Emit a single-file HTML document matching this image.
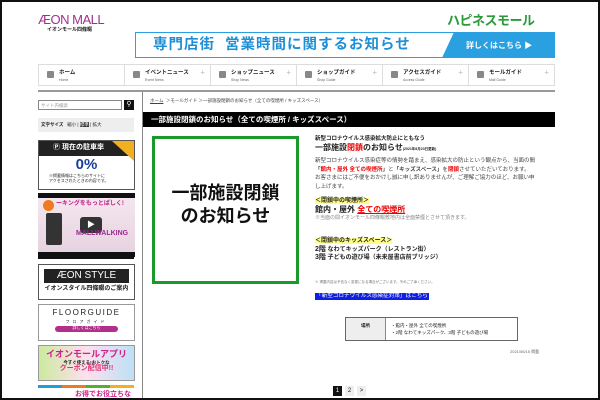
<!DOCTYPE html>
<html><head><meta charset="utf-8"><style>
*{margin:0;padding:0;box-sizing:border-box}
body{width:600px;height:400px;overflow:hidden;background:#fff;font-family:"Liberation Sans","Noto Sans CJK JP",sans-serif;position:relative;color:#222}
.a{position:absolute;line-height:1.2}
.frame{left:0;top:0;width:600px;height:400px;border:2px solid #111;z-index:50;pointer-events:none}
.nav{left:38px;top:64px;width:517px;height:22px;border:1px solid #ddd;display:flex}
.nav div{flex:1;border-right:1px solid #ddd;position:relative;font-size:5.5px;font-weight:bold;padding:5px 0 0 20px;line-height:6px;white-space:nowrap}
.nav div:last-child{border-right:none}
.nav div small{display:block;font-size:3.5px;font-weight:normal;color:#666;margin-top:1px}
.nav div i{position:absolute;left:8px;top:6px;width:7px;height:7px;background:#888;border-radius:1px}
.nav div b{position:absolute;right:5px;top:5px;color:#bbb;font-weight:normal;font-size:8px}
.t{font-size:5px;color:#444;white-space:nowrap}
.red{color:#e00}
.yl{background:#ff8;font-weight:bold;font-size:6px;line-height:7px}
</style></head><body>
<div class="a frame"></div>
<div class="a" style="left:38px;top:12px;font-size:13px;color:#a0308f;letter-spacing:-0.5px">ÆON MALL</div>
<div class="a" style="left:47px;top:27px;font-size:5px;font-weight:bold">イオンモール四條畷</div>
<div class="a" style="left:447px;top:13px;font-size:13px;font-weight:bold;color:#2a9a3a;letter-spacing:-0.5px">ハピネスモール</div>
<div class="a" style="left:135px;top:32px;width:420px;height:26px;border:1px solid #2aa0e0;background:#fff;overflow:hidden">
 <div class="a" style="left:17px;top:4px;font-size:14.5px;font-weight:bold;color:#1e8fd6;letter-spacing:1px;white-space:nowrap">専門店街&nbsp; 営業時間に関するお知らせ</div>
 <div class="a" style="left:305px;top:-1px;width:130px;height:28px;background:#2aa0e0;transform:skewX(-25deg);transform-origin:bottom left"></div>
 <div class="a" style="left:330px;top:8px;font-size:8px;font-weight:bold;color:#fff">詳しくはこちら ▶</div>
</div>
<div class="a nav">
 <div><i></i>ホーム<small>Home</small></div>
 <div><i></i>イベントニュース<small>Event News</small><b>+</b></div>
 <div><i></i>ショップニュース<small>Shop News</small><b>+</b></div>
 <div><i></i>ショップガイド<small>Shop Guide</small><b>+</b></div>
 <div><i></i>アクセスガイド<small>Access Guide</small><b>+</b></div>
 <div><i></i>モールガイド<small>Mall Guide</small><b>+</b></div>
</div>
<div class="a" style="left:38px;top:90px;width:517px;height:2px;background:#999"></div>
<div class="a" style="left:142px;top:92px;width:1px;height:308px;background:#888"></div>
<!-- sidebar -->
<div class="a" style="left:38px;top:100px;width:84px;height:10px;border:1px solid #888;font-size:4.5px;color:#999;padding:2px">サイト内検索</div>
<div class="a" style="left:124px;top:100px;width:10px;height:10px;background:#111;color:#fff;font-size:7px;text-align:center;line-height:10px">⚲</div>
<div class="a" style="left:38px;top:118px;width:96px;height:14px;background:#eee;font-size:4.5px;padding:4px 3px;white-space:nowrap"><b>文字サイズ</b> &nbsp; 縮小 | <span style="background:#333;color:#fff">標準</span> | 拡大</div>
<div class="a" style="left:38px;top:140px;width:97px;height:50px;border:1px solid #555">
 <div style="background:#222;height:15px;color:#fff;font-size:7px;font-weight:bold;padding:3px 0 0 14px">Ⓟ 現在の駐車率</div>
 <div class="a" style="right:0;top:0;width:0;height:0;border-top:20px solid #f0b020;border-left:22px solid transparent"></div>
 <div style="text-align:center;font-size:15px;font-weight:bold;color:#1a3e9a;line-height:17px">0%</div>
 <div style="font-size:4px;padding-left:10px;line-height:5px">※掲載情報はこちらのサイトに<br>アクセスされたときの内容です。</div>
</div>
<div class="a" style="left:38px;top:193px;width:97px;height:64px;background:#111">
 <div class="a" style="left:0;top:5px;width:97px;height:54px;background:linear-gradient(#f4e6ee,#e6d3e0)"></div>
 <div class="a" style="left:5px;top:7px;width:11px;height:11px;border-radius:50%;background:#f07a20"></div>
 <div class="a" style="left:18px;top:8px;font-size:6px;color:#c0208a;font-weight:bold">ーキングをもっとぱしく!</div>
 <div class="a" style="left:8px;top:20px;width:16px;height:32px;background:#333;border-radius:2px"></div>
 <div class="a" style="left:42px;top:24px;width:22px;height:16px;background:#333;border-radius:3px;color:#fff;font-size:8px;text-align:center;line-height:16px">▶</div>
 <div class="a" style="left:38px;top:37px;font-size:7px;color:#9a2a90;font-weight:bold">MALLWALKING</div>
</div>
<div class="a" style="left:38px;top:253px;width:96px;height:6px;background:#111"></div>
<div class="a" style="left:38px;top:264px;width:97px;height:36px;border:1px solid #555">
 <div style="margin:4px 5px 0;background:#222;color:#fff;font-size:10px;text-align:center;height:14px;line-height:14px">ÆON STYLE</div>
 <div style="font-size:6px;font-weight:bold;text-align:center;margin-top:3px">イオンスタイル四條畷のご案内</div>
</div>
<div class="a" style="left:38px;top:304px;width:97px;height:37px;border:1px solid #999;text-align:center">
 <div style="font-size:8px;letter-spacing:1.5px;margin-top:3px">FLOORGUIDE</div>
 <div style="font-size:4px;letter-spacing:3px;margin-top:2px">フロアガイド</div>
 <div style="margin:2px 16px 0;background:#b0308a;color:#fff;font-size:4px;border-radius:3px;height:6px">詳しくはこちら</div>
</div>
<div class="a" style="left:38px;top:345px;width:97px;height:36px;border:1px solid #999;background:linear-gradient(90deg,#cde9a0,#fde0ef,#bde0f5);text-align:center">
 <div style="font-size:9px;font-weight:bold;color:#d0208a;margin-top:3px">イオンモールアプリ</div>
 <div style="font-size:4.5px;font-weight:bold">今すぐ使える!おトクな</div>
 <div style="font-size:7px;font-weight:bold;color:#e03070">クーポン配信中!!</div>
</div>
<div class="a" style="left:38px;top:385px;width:96px;height:3px;background:linear-gradient(90deg,#20a0d0 25%,#f07a20 25% 50%,#50b030 50% 75%,#f0b020 75%)"></div>
<div class="a" style="left:75px;top:391px;font-size:7px;font-weight:bold;color:#d0208a">お得でお役立ちな</div>
<!-- main -->
<div class="a t" style="left:150px;top:98px;font-size:4.5px"><u>ホーム</u> &nbsp;＞モールガイド ＞一部施設閉鎖のお知らせ（全ての喫煙所 / キッズスペース）</div>
<div class="a" style="left:143px;top:112px;width:412px;height:15px;background:#000;color:#fff;font-size:7.5px;font-weight:bold;padding:3px 0 0 8px;white-space:nowrap">一部施設閉鎖のお知らせ（全ての喫煙所 / キッズスペース）</div>
<div class="a" style="left:152px;top:136px;width:147px;height:148px;border:3px solid #1a9a2a;text-align:center;font-size:18px;font-weight:bold;line-height:23px;padding-top:43px;color:#111">一部施設閉鎖<br>のお知らせ</div>
<div class="a" style="left:315px;top:136px;font-size:5.5px;font-weight:bold;white-space:nowrap">新型コロナウイルス感染拡大防止にともなう</div>
<div class="a" style="left:315px;top:143px;font-size:8px;font-weight:bold;white-space:nowrap">一部施設<span class="red">閉鎖</span>のお知らせ<span style="font-size:3.5px">(2021年8月23日更新)</span></div>
<div class="a t" style="left:315px;top:157px;line-height:8.5px;font-size:5.5px">新型コロナウイルス感染症等の情勢を踏まえ、感染拡大の防止という観点から、当面の間<br><b>「<span class="red">館内・屋外 全ての喫煙所</span>」</b>と<b>「キッズスペース」</b>を<b class="red">閉鎖</b>させていただいております。<br>お客さまにはご不便をおかけし誠に申し訳ありませんが、ご理解ご協力のほど、お願い申<br>し上げます。</div>
<div class="a" style="left:315px;top:198px;font-size:6px;line-height:7px"><span class="yl">＜閉鎖中の喫煙所＞</span></div>
<div class="a" style="left:315px;top:205px;font-size:8px;line-height:10px;font-weight:bold;white-space:nowrap">館内・屋外 <u class="red">全ての喫煙所</u></div>
<div class="a t" style="left:315px;top:215px;color:#888;line-height:6px">※当面の間イオンモール四條畷敷地内は全面禁煙とさせて頂きます。</div>
<div class="a" style="left:315px;top:238px;font-size:6px;line-height:7px"><span class="yl">＜閉鎖中のキッズスペース＞</span></div>
<div class="a" style="left:315px;top:246px;font-size:6px;line-height:8px;font-weight:bold;white-space:nowrap"><span style="font-size:7px">2階</span> なわてキッズパーク（レストラン街）</div>
<div class="a" style="left:315px;top:254px;font-size:6px;line-height:8px;font-weight:bold;white-space:nowrap"><span style="font-size:7px">3階</span> 子どもの遊び場（未来屋書店前ブリッジ）</div>
<div class="a t" style="left:315px;top:280px;font-size:3.5px;color:#777">※ 掲載内容は予告なく変更になる場合がございます。予めご了承ください。</div>
<div class="a" style="left:315px;top:293px;font-size:5.6px;line-height:7px;background:#1020e0;color:#fff;padding:0 1px;white-space:nowrap">「新型コロナウイルス感染症対策」はこちら</div>
<div class="a" style="left:345px;top:317px;width:173px;height:24px;border:1px solid #666;display:flex;font-size:4.5px">
 <div style="width:40px;background:#eee;border-right:1px solid #888;text-align:center;padding-top:5px;font-weight:bold">場所</div>
 <div style="padding:4px 0 0 5px;line-height:7px;white-space:nowrap">・館内・屋外 全ての喫煙所<br>・2階 なわてキッズパーク、3階 子どもの遊び場</div>
</div>
<div class="a t" style="left:510px;top:350px;font-size:4px;color:#666">2021/06/15 掲載</div>
<div class="a" style="left:333px;top:386px;width:9px;height:10px;background:#111;color:#fff;font-size:6px;text-align:center;line-height:10px">1</div>
<div class="a" style="left:345px;top:386px;width:9px;height:10px;background:#eee;font-size:6px;text-align:center;line-height:10px">2</div>
<div class="a" style="left:357px;top:386px;width:9px;height:10px;background:#eee;font-size:6px;text-align:center;line-height:10px">&gt;</div>
</body></html>
